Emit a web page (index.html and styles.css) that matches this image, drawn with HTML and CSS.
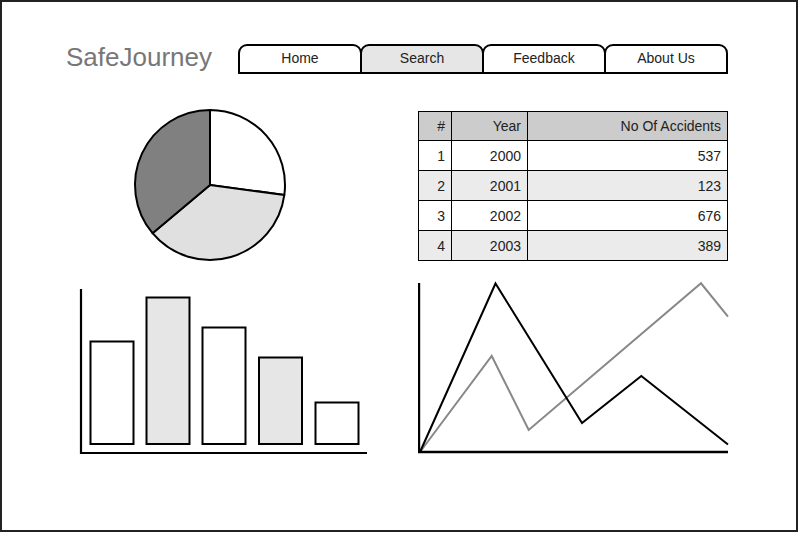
FILE: index.html
```html
<!DOCTYPE html>
<html>
<head>
<meta charset="utf-8">
<title>SafeJourney</title>
<link rel="stylesheet" href="styles.css">
</head>
<body>
<div class="frame">
  <header class="header">
    <div class="title">SafeJourney</div>
    <nav class="tabs">
      <div class="tab">Home</div>
      <div class="tab tab-active">Search</div>
      <div class="tab">Feedback</div>
      <div class="tab">About Us</div>
    </nav>
  </header>
  <main class="dash">
    <div class="cell">
      <svg class="pie" width="300" height="160" viewBox="0 0 300 160">
        <g stroke="#000" stroke-width="2" stroke-linejoin="round">
          <path d="M136 80 V5 A75 75 0 0 1 210.34 89.92 Z" fill="#fff"/>
          <path d="M136 80 L210.34 89.92 A75 75 0 0 1 78.55 128.21 Z" fill="#e0e0e0"/>
          <path d="M136 80 L78.55 128.21 A75 75 0 0 1 136 5 Z" fill="#808080"/>
        </g>
      </svg>
    </div>
    <div class="cell">
      <table class="data">
        <thead>
          <tr><th class="c1">#</th><th class="c2">Year</th><th class="c3">No Of Accidents</th></tr>
        </thead>
        <tbody>
          <tr><td>1</td><td>2000</td><td>537</td></tr>
          <tr class="alt"><td>2</td><td>2001</td><td>123</td></tr>
          <tr><td>3</td><td>2002</td><td>676</td></tr>
          <tr class="alt"><td>4</td><td>2003</td><td>389</td></tr>
        </tbody>
      </table>
    </div>
    <div class="cell">
      <svg class="bars" width="300" height="180" viewBox="0 0 300 180">
        <g stroke="#000" stroke-width="2">
          <rect x="16.5" y="61.5" width="43" height="102.5" fill="#fff"/>
          <rect x="72.5" y="17.5" width="43" height="146.5" fill="#e6e6e6"/>
          <rect x="128.5" y="47.5" width="43" height="116.5" fill="#fff"/>
          <rect x="185" y="77.5" width="43" height="86.5" fill="#e6e6e6"/>
          <rect x="241.5" y="122.5" width="43" height="41.5" fill="#fff"/>
          <path d="M7 9 V173 H293" fill="none" stroke-width="2.2"/>
        </g>
      </svg>
    </div>
    <div class="cell">
      <svg class="lines" width="312" height="180" viewBox="0 0 312 180">
        <polyline points="2,172 73.7,76 110.7,150 283,3.3 310,36.7" fill="none" stroke="#888" stroke-width="2"/>
        <polyline points="2,172 77.5,3.5 164,143 223.3,96 310,164.5" fill="none" stroke="#000" stroke-width="2"/>
        <path d="M1 3 V172 H310" fill="none" stroke="#000" stroke-width="2.4"/>
      </svg>
    </div>
  </main>
</div>
</body>
</html>
```

FILE: styles.css
```css
* { box-sizing: border-box; }
html, body { margin: 0; padding: 0; background: #fff; }
body { font-family: "Liberation Sans", Arial, sans-serif; }

.frame {
  width: 798px;
  height: 532px;
  border: 2px solid #222;
  background: #fff;
  padding-top: 42px;
}

.header {
  display: flex;
  justify-content: space-between;
  align-items: flex-start;
  padding-left: 64px;
  padding-right: 68px;
}

.title {
  font-size: 26px;
  line-height: 30px;
  color: #777;
  margin-top: -2px;
}

.tabs {
  display: flex;
}

.tab {
  width: 124px;
  height: 30px;
  border: 2px solid #000;
  border-radius: 9px 9px 0 0;
  background: #fff;
  font-size: 14px;
  line-height: 24px;
  text-align: center;
  color: #222;
}
.tab + .tab { margin-left: -2px; }
.tab-active { background: #e6e6e6; }

.dash {
  display: grid;
  grid-template-columns: 300px 312px;
  column-gap: 44px;
  row-gap: 15px;
  margin-top: 31px;
  padding-left: 72px;
}

.cell svg { display: block; }

.data {
  margin-top: 6px;
  border-collapse: separate;
  border-spacing: 0;
  table-layout: fixed;
  width: 310px;
  border-top: 1px solid #000;
  border-left: 1px solid #000;
  font-size: 14px;
  color: #222;
}
.data .c1 { width: 33px; }
.data .c2 { width: 76px; }
.data .c3 { width: 200px; }
.data th, .data td {
  border-right: 1px solid #000;
  border-bottom: 1px solid #000;
  padding: 0 6px 0 0;
  line-height: 16px;
  text-align: right;
  font-weight: normal;
  vertical-align: middle;
}
.data thead tr { height: 29px; background: #cccccc; }
.data tbody tr { height: 30px; }
.data tr.alt { background: #ebebeb; }
```
